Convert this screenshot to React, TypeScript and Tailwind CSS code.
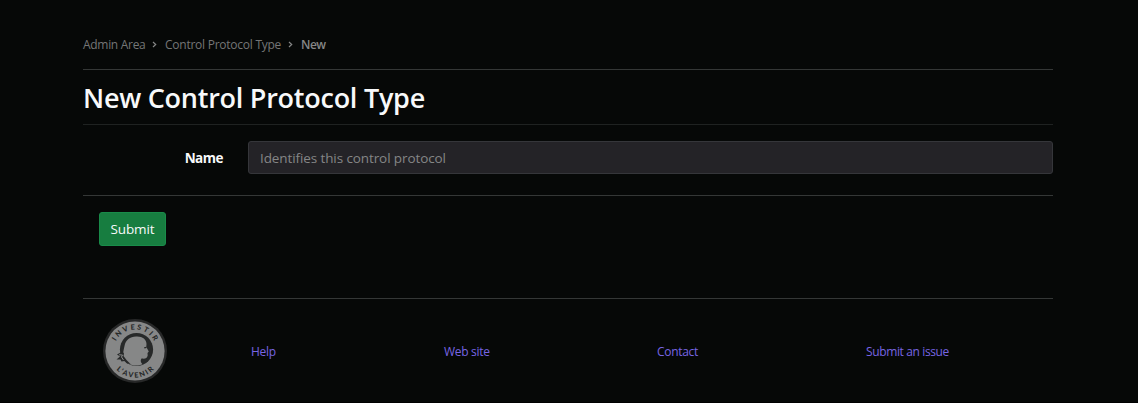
import React from "react";

function Seal() {
  return (
    <svg width="64" height="64" viewBox="0 0 64 64" role="img" aria-label="Investir l'avenir">
      <defs>
        <path id="seal-top" d="M10.500 32a21.500 21.500 0 0 1 43 0" />
        <path id="seal-bottom" d="M5.500 32a26.500 26.500 0 0 0 53 0" />
      </defs>
      <circle cx="32" cy="32" r="32" fill="#272828" />
      <circle cx="32" cy="32" r="29.6" fill="#868787" />
      <circle cx="33.500" cy="30.500" r="16.600" fill="#272929" />
      <path
        d="M20 41C19.500 36 20.500 31 21.500 27C22.500 21 27 17.800 33 17.500C39 17 43.500 20 43.500 25L43.300 28L45.800 32.500L44.500 34L44.700 36.500C44 39.500 42 40 38.500 39.500C37.200 41.500 37.500 43 39.500 45.200C34 47.700 28 46.500 24.500 44Z"
        fill="#868787"
      />
      <path d="M41 28.200L43.500 27.700V29L41.500 29.500Z" fill="#272929" />
      <path d="M14 35.500L19.500 32.500L21 34.500L20.500 37L23.500 41L27.500 45L24 44.500L21.500 42L18.500 42.500L17.500 40.500L13.500 40.500L17 37.500Z" fill="#272929" />
      <path d="M16 35.800L19.500 36L18.500 38L20.500 41" fill="none" stroke="#868787" />
      <g className="font-['Lato','Open_Sans',sans-serif] font-black" fill="#272929" fontSize="7.200">
        <text textAnchor="middle" letterSpacing="2.100">
          <textPath href="#seal-top" startOffset="51.500%">INVESTIR</textPath>
        </text>
        <text textAnchor="middle" letterSpacing="1.600">
          <textPath href="#seal-bottom" startOffset="51%">L’AVENIR</textPath>
        </text>
      </g>
    </svg>
  );
}

function Chevron() {
  return (
    <svg className="mt-[-1px] shrink-0" width="5" height="7" viewBox="0 0 5 7" fill="none" stroke="#858686" strokeWidth="1.200">
      <path d="M1 1l2.700 2.500L1 6" />
    </svg>
  );
}

export default function App() {
  return (
    <div className="h-[403px] overflow-hidden border-b border-black bg-[#060807] pr-[85px] pl-[83px] font-['Open_Sans','Noto_Sans',sans-serif] text-[#f8f9fa]">
      <nav className="flex h-[69px] items-center pt-[21px] text-[12px] leading-[18px] text-[#757676]">
        <a href="#" className="w-[69px] shrink-0 tracking-[-0.3px] whitespace-nowrap">Admin Area</a>
        <Chevron />
        <a href="#" className="ml-[8px] w-[123px] shrink-0 tracking-[-0.25px] whitespace-nowrap">Control Protocol Type</a>
        <Chevron />
        <span className="ml-[8px] font-semibold tracking-[-0.5px] text-[#858686]">New</span>
      </nav>
      <main className="border-t border-[#343736]">
        <h1 className="h-[55px] border-b border-[#1f2221] pt-[7px] text-[27px] leading-[42px] font-semibold tracking-[-0.25px] whitespace-nowrap">
          New Control Protocol Type
        </h1>
        <form onSubmit={(e) => e.preventDefault()}>
          <div className="flex h-[70px] items-start pt-[16px]">
            <label htmlFor="name" className="w-[165px] shrink-0 pr-[25px] text-right text-[13.500px] leading-[34px] font-bold tracking-[-0.5px]">
              Name
            </label>
            <input
              id="name"
              placeholder="Identifies this control protocol"
              className="h-[33px] min-w-0 flex-1 rounded-[3px] border border-[#35363a] bg-[#242327] px-[11px] text-[13.500px] tracking-[-0.1px] outline-none placeholder:text-[#858686]"
            />
          </div>
          <div className="h-[103px] border-t border-[#343736] pt-[16px] pl-[16px]">
            <button className="h-[34px] w-[67px] rounded-[3px] border border-[#198b49] bg-[#177d40] text-[13.500px] leading-[32px] tracking-[-0.15px]">
              Submit
            </button>
          </div>
        </form>
      </main>
      <footer className="flex h-[104px] items-start border-t border-[#343736] pt-[20px] pl-[20px] text-[12px] leading-[66px] tracking-[-0.3px] text-[#7765e3]">
        <div className="w-[148px] shrink-0"><Seal /></div>
        <a href="#" className="w-[193px] shrink-0">Help</a>
        <a href="#" className="w-[213px] shrink-0">Web site</a>
        <a href="#" className="w-[209px] shrink-0">Contact</a>
        <a href="#" className="whitespace-nowrap tracking-[-0.37px]">Submit an issue</a>
      </footer>
    </div>
  );
}
